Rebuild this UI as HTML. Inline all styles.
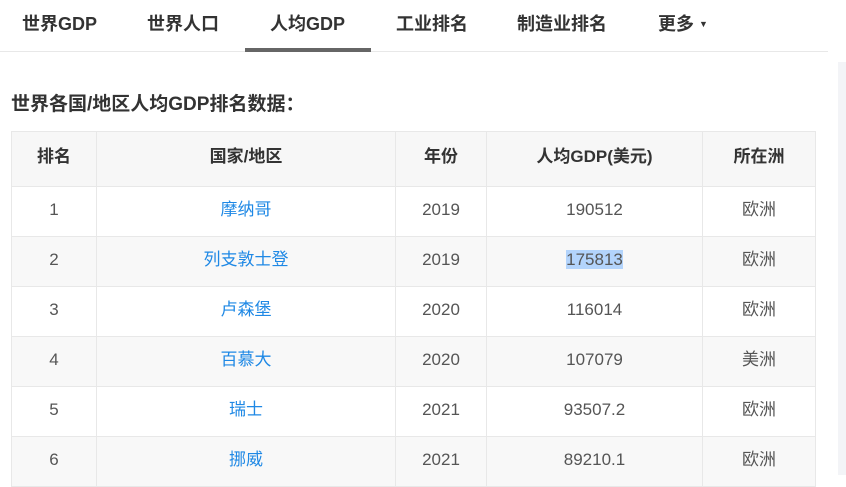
<!DOCTYPE html>
<html><head><meta charset="utf-8"><style>
*{margin:0;padding:0;box-sizing:border-box}
body{width:846px;height:475px;overflow:hidden;background:#fff;font-family:"Liberation Sans","Noto Sans CJK SC",sans-serif;color:#555;position:relative}
.nav{position:absolute;left:0;top:0;width:828px;height:52px;border-bottom:1px solid #e8e8e8}
.nav span{position:absolute;top:10px;font-size:18px;font-weight:bold;color:#333;white-space:nowrap}
.ul{position:absolute;left:245px;top:48px;width:126px;height:4px;background:#666}
.strip{position:absolute;left:838px;top:62px;width:8px;height:413px;background:#f3f4f7}
h3{position:absolute;left:11px;top:89px;font-size:19px;font-weight:bold;color:#333;white-space:nowrap}
table{position:absolute;left:11px;top:131px;border-collapse:collapse;width:805px;font-size:17px}
td,th{border:1px solid #e8e8e8;text-align:center;height:50px;line-height:20px}
td{padding-bottom:3px}
th{height:55px;background:#f7f7f7;color:#333;font-weight:bold;font-size:17px;vertical-align:middle;padding-bottom:4px}
tr.g td{background:#f8f8f8}
a{color:#1e88e5;text-decoration:none}
.sel{background:#b3d4fc}
</style></head><body>
<div class="nav">
<span style="left:22px">世界GDP</span>
<span style="left:147px">世界人口</span>
<span style="left:270px">人均GDP</span>
<span style="left:396px">工业排名</span>
<span style="left:517px">制造业排名</span>
<span style="left:658px">更多 <small style="font-size:9px;vertical-align:3px">▼</small></span>
</div>
<div class="ul"></div>
<div class="strip"></div>
<h3>世界各国/地区人均GDP排名数据：</h3>
<table>
<tr><th style="width:85px">排名</th><th style="width:299px">国家/地区</th><th style="width:91px">年份</th><th style="width:216px">人均GDP(美元)</th><th>所在洲</th></tr>
<tr><td>1</td><td><a>摩纳哥</a></td><td>2019</td><td>190512</td><td>欧洲</td></tr>
<tr class="g"><td>2</td><td><a>列支敦士登</a></td><td>2019</td><td><span class="sel">175813</span></td><td>欧洲</td></tr>
<tr><td>3</td><td><a>卢森堡</a></td><td>2020</td><td>116014</td><td>欧洲</td></tr>
<tr class="g"><td>4</td><td><a>百慕大</a></td><td>2020</td><td>107079</td><td>美洲</td></tr>
<tr><td>5</td><td><a>瑞士</a></td><td>2021</td><td>93507.2</td><td>欧洲</td></tr>
<tr class="g"><td>6</td><td><a>挪威</a></td><td>2021</td><td>89210.1</td><td>欧洲</td></tr>
</table>
</body></html>
